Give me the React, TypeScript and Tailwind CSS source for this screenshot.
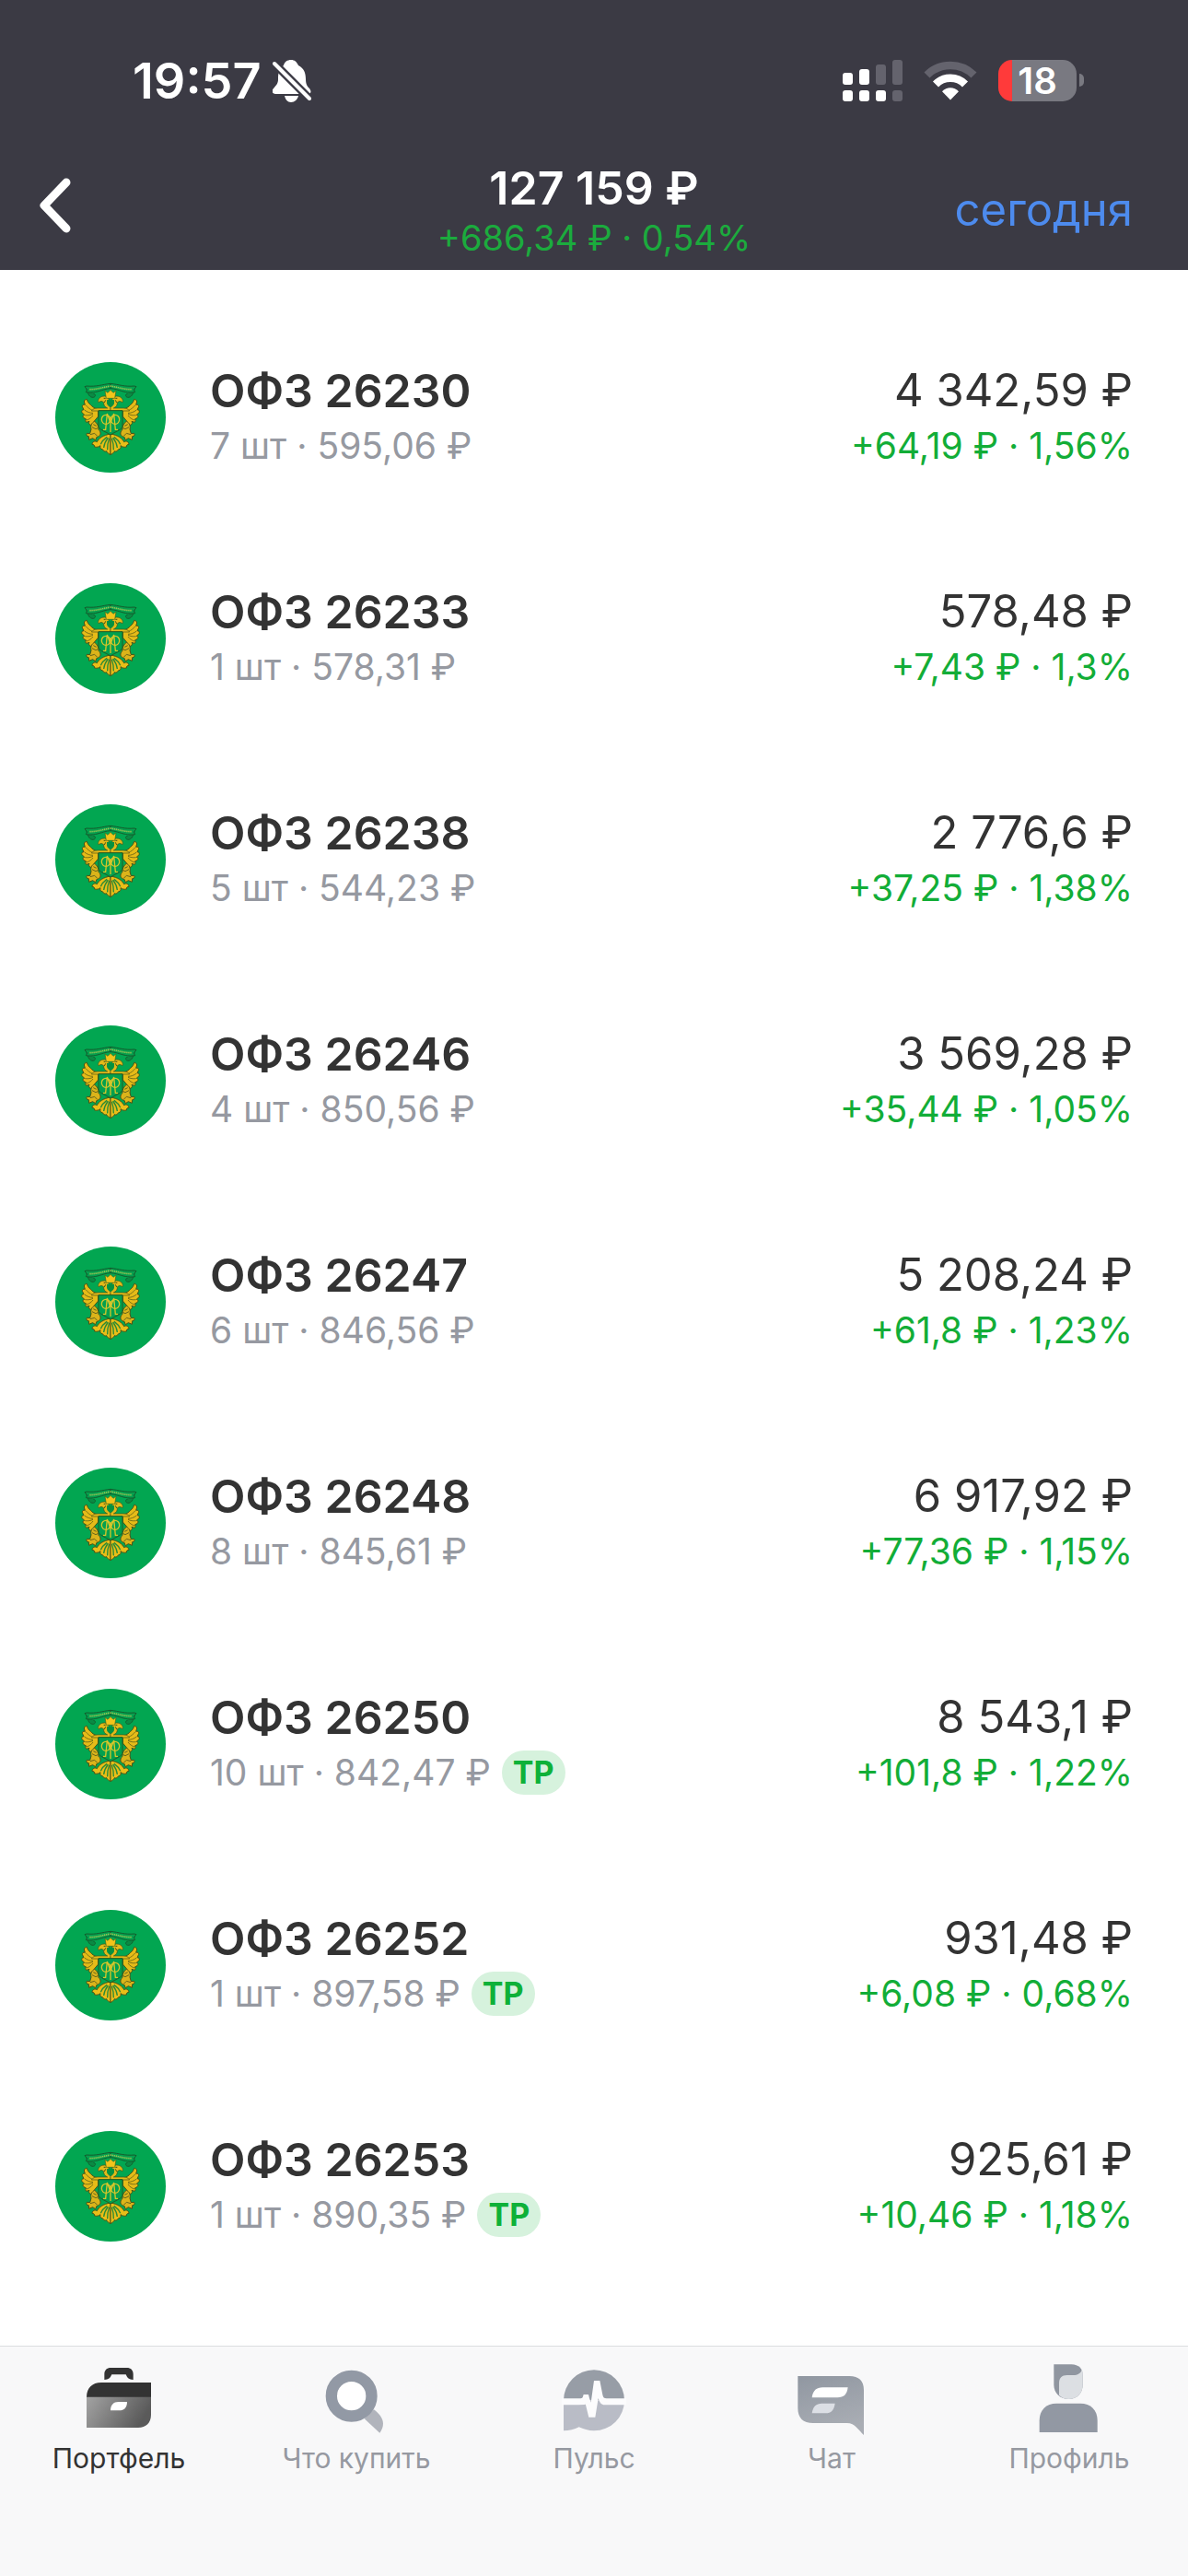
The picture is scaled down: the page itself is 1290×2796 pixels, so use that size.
import clsx from 'clsx';
import type { ReactNode } from 'react';

type Bond = {
  id: number;
  title: string;
  info: string;
  total: string;
  profit: string;
  hasBadge?: boolean;
};

const bonds: Bond[] = [
  { id: 1, title: 'ОФЗ 26230', info: '7 шт · 595,06 ₽', total: '4 342,59 ₽', profit: '+64,19 ₽ · 1,56%' },
  { id: 2, title: 'ОФЗ 26233', info: '1 шт · 578,31 ₽', total: '578,48 ₽', profit: '+7,43 ₽ · 1,3%' },
  { id: 3, title: 'ОФЗ 26238', info: '5 шт · 544,23 ₽', total: '2 776,6 ₽', profit: '+37,25 ₽ · 1,38%' },
  { id: 4, title: 'ОФЗ 26246', info: '4 шт · 850,56 ₽', total: '3 569,28 ₽', profit: '+35,44 ₽ · 1,05%' },
  { id: 5, title: 'ОФЗ 26247', info: '6 шт · 846,56 ₽', total: '5 208,24 ₽', profit: '+61,8 ₽ · 1,23%' },
  { id: 6, title: 'ОФЗ 26248', info: '8 шт · 845,61 ₽', total: '6 917,92 ₽', profit: '+77,36 ₽ · 1,15%' },
  { id: 7, title: 'ОФЗ 26250', info: '10 шт · 842,47 ₽', total: '8 543,1 ₽', profit: '+101,8 ₽ · 1,22%', hasBadge: true },
  { id: 8, title: 'ОФЗ 26252', info: '1 шт · 897,58 ₽', total: '931,48 ₽', profit: '+6,08 ₽ · 0,68%', hasBadge: true },
  { id: 9, title: 'ОФЗ 26253', info: '1 шт · 890,35 ₽', total: '925,61 ₽', profit: '+10,46 ₽ · 1,18%', hasBadge: true },
];

const BellOffIcon = () => (
  <svg className="h-[46px] w-[42px]" viewBox="0 0 42 46" aria-hidden="true">
    <path
      d="M20 0c4 0 6 2 8 6 6 3 8 8 8 15 0 6 2 8 4 10 3 4 1 6-2 6H3c-3 0-5-3-2-6 3-4 5-5 5-10 0-7 1-11 6-15 1-4 4-6 8-6Z"
      fill="#fff"
    />
    <path d="M13 39h15c-1 4-4 7-8 7s-6-3-7-7Z" fill="#fff" />
    <path d="M0 2 42 44" stroke="#3b3a44" strokeWidth="9" />
    <path d="M2 4 40 42" stroke="#fff" strokeWidth="4" strokeLinecap="round" />
  </svg>
);

const SignalIcon = () => (
  <svg className="h-[45px] w-[65px]" viewBox="0 0 65 45" aria-hidden="true">
    <g fill="#fff">
      <rect y="14" width="11" height="13" rx="3" />
      <rect x="18" y="10" width="11" height="17" rx="3" />
      <rect y="33" width="11" height="12" rx="3" />
      <rect x="18" y="33" width="11" height="12" rx="3" />
      <rect x="36" y="33" width="11" height="12" rx="3" />
    </g>
    <g fill="#64636d">
      <rect x="36" y="5" width="11" height="22" rx="3" />
      <rect x="54" y="0" width="11" height="27" rx="3" />
      <rect x="54" y="33" width="11" height="12" rx="3" />
    </g>
  </svg>
);

const WifiIcon = () => (
  <svg className="h-[43px] w-[58px]" viewBox="0 0 58 43" aria-hidden="true">
    <path d="M3.500 15.500a36 36 0 0 1 51 0" stroke="#64636d" strokeWidth="8.500" fill="none" />
    <path d="M13 25.500a22.500 22.500 0 0 1 32 0" stroke="#fff" strokeWidth="8.500" fill="none" />
    <path d="M29 42.500 20 33.200c5-5.200 13-5.200 18 0Z" fill="#fff" />
  </svg>
);

const Battery = () => (
  <div className="flex items-center gap-[3px]">
    <div className="flex h-[45px] w-[85px] items-center justify-center rounded-[15px] bg-linear-to-r from-[#ff3a3a] from-[18%] to-[#797981] to-[18%] text-[40px] leading-[45px] font-semibold">
      18
    </div>
    <div className="h-[14px] w-[5px] rounded-r-full bg-[#797981]" />
  </div>
);

const EagleHalf = () => (
  <>
    {/* ribbon */}
    <path d="M102 88c4 16 10 28 22 27 9-2 8-12 0-12" fill="#0a8a44" stroke="#14612f" strokeWidth="3" />
    <path d="M180 70c-28 3-45 11-78 8l-6 2 8 10-4 8c22 4 42-3 58-8 8-2 15-4 22-4Z" fill="#069f4e" stroke="#145c2d" strokeWidth="3" />
    <path d="M112 89c24 0 44-7 68-11" stroke="#9cc653" strokeWidth="5" strokeDasharray="4 2" fill="none" />

    {/* wing */}
    <path
      d="M140 154c-12-3-20-9-25-15-7-5-10-11-12-18-5 0-8 3-9 8l3 10c-6-2-9 1-9 6l5 10c-6 0-8 4-6 9l8 8c-6 1-6 6-2 10l8 4c-4 3-3 8 1 10l9-3c-3 5-1 10 4 12 6-1 10-6 13-14l12-14Z"
      fill="#e6bb18"
      stroke="#4a5216"
      strokeWidth="3"
    />
    <path d="M99 140c7 8 14 14 24 18M95 156c9 7 18 10 28 10M97 173c10 1 18 0 26-4M102 189c9-3 16-8 21-15" stroke="#7a7317" strokeWidth="3" fill="none" />

    {/* head */}
    <path
      d="M170 150c-8-4-13-10-12-18-4-6-10-6-17-1-4-9 5-20 19-20 11 1 17 9 13 17-3 8 0 14 7 20v11h-62c4-6 10-9 20-9Z"
      fill="#e2ba1a"
      stroke="#4a5216"
      strokeWidth="2"
    />
    <path d="M158 118h6M164 124l-4 8" stroke="#4a5216" strokeWidth="3" />

    {/* paw */}
    <path
      d="M128 193c-9 4-14 14-11 26l-4 14-10-1c-3 6 0 10 6 10l1 11 12-5 9 6 4-10c12-3 15-10 10-20l-4-4c1-12-5-22-13-27Z"
      fill="#dbb41a"
      stroke="#4a5216"
      strokeWidth="3"
    />
    <path d="m120 212 12 6 8-4M124 203l10 5M114 236l14-4 8 8" stroke="#67651a" strokeWidth="3" fill="none" />

    {/* tail */}
    <path
      d="M180 234c-24 4-38 14-44 26-8-5-15 0-16 8 6 0 8 3 8 8 8 2 14 0 19-4-2 7 1 12 7 12 3 6 8 8 13 6 2 5 7 9 13 11Z"
      fill="#e9be18"
      stroke="#4a5216"
      strokeWidth="3"
    />
    <path d="M168 244c-10 7-16 14-20 24M172 246c-9 12-13 22-14 33M176 248c-5 14-7 26-6 38" stroke="#2c8a35" strokeWidth="4" fill="none" />
  </>
);

const BondLogo = () => (
  <svg className="size-[120px] shrink-0" viewBox="0 0 360 360" aria-hidden="true">
    <circle cx="180" cy="180" r="180" fill="#02a651" />
    <EagleHalf />
    <g transform="matrix(-1 0 0 1 360 0)">
      <EagleHalf />
    </g>
    <path d="m162 93 9 7 9-9 9 9 9-7-4 25h-28Z" fill="#f2c41b" stroke="#3d6a1c" strokeWidth="2" />
    <path d="M168 123h24v10c0 7-5 10-12 13-7-3-12-6-12-13Z" fill="#06913f" />
    <path d="M141 158h78v50c0 12-19 16-39 29-20-13-39-17-39-29Z" fill="#02a04e" stroke="#245b22" strokeWidth="3" />
    <g stroke="#d6c62a" strokeWidth="4" fill="none">
      <path d="M180 178v50M156 220h8l5-52 11 30 11-30 5 52h8" />
      <ellipse cx="165" cy="187" rx="14" ry="15" />
      <ellipse cx="195" cy="187" rx="14" ry="15" />
    </g>
  </svg>
);

const BriefcaseIcon = () => (
  <svg className="size-20" viewBox="0 0 240 240" aria-hidden="true">
    <defs>
      <linearGradient id="case" x1="0" y1="0" x2="1" y2="0.300">
        <stop offset="0" stopColor="#a3a3a3" />
        <stop offset="1" stopColor="#5a5a5a" />
      </linearGradient>
    </defs>
    <path d="M73 60V42c0-13 8-21 21-21h52c13 0 21 8 21 21v18c-14 0-19-6-24-17H97c-5 11-10 17-24 17Z" fill="#333" />
    <path d="M15 117c0-30 18-48 48-48h162v48Z" fill="#333" />
    <path d="M15 116h210v58c0 26-16 42-42 42H15Z" fill="url(#case)" />
    <path d="M93 160c0-18 10-28 26-28h28c0 18-9 28-26 28Z" fill="#fff" />
  </svg>
);

const SearchIcon = () => (
  <svg className="size-20" viewBox="0 0 240 240" aria-hidden="true">
    <path d="m146 187 31-30c16 12 29 27 30 45 0 12-4 22-11 31Z" fill="#b1b4bc" />
    <circle cx="104" cy="113" r="65.500" fill="#fff" stroke="#9299a5" strokeWidth="37" />
  </svg>
);

const PulseIcon = () => (
  <svg className="size-20" viewBox="0 0 240 240" aria-hidden="true">
    <path d="M21 127a99 99 0 0 1 198 0Z" fill="#979da6" />
    <path d="M21 127h198a99 99 0 0 1-99 99c-18 0-35-5-49-12-15 8-32 12-50 12Z" fill="#b9bcc6" />
    <path
      d="M15 121h61c5 0 7-2 8-6l2-7h16l3 12 5 14 10-71h19l9 46c2 9 5 12 13 12h64v21h-70c-11 0-17-8-21-22l-10 62h-21l-10-40c-1-3-2-1-5-1l-19 1H15Z"
      fill="#fcfcfd"
    />
  </svg>
);

const ChatIcon = () => (
  <svg className="size-20" viewBox="0 0 240 240" aria-hidden="true">
    <defs>
      <linearGradient id="chat" x1="0" y1="0" x2="0.300" y2="1">
        <stop offset="0" stopColor="#9097a1" />
        <stop offset="1" stopColor="#a9adb4" />
      </linearGradient>
    </defs>
    <path d="M10 48h168c31 0 47 16 47 45v147c-17-15-28-39-55-39H60c-33 0-50-17-50-49Z" fill="url(#chat)" />
    <path d="M56 118c3-23 15-33 35-33h82c-3 23-13 33-34 33Z" fill="#fff" />
    <path d="M56 169c3-22 14-32 32-32h43c-3 22-12 32-31 32Z" fill="#dcdfe5" />
  </svg>
);

const ProfileIcon = () => (
  <svg className="size-20" viewBox="0 0 240 240" aria-hidden="true">
    <path d="M70 10h57c25 0 37 15 37 35v31c0 28-18 47-46 47S70 104 70 76Z" fill="#9096a0" />
    <path d="M87 110V72c0-18 9-27 26-27h20c15 0 24-6 29-18l2 12v37c0 28-18 47-46 47-12 0-23-5-31-13Z" fill="#dcdfe3" />
    <path d="M23 231v-38c0-35 22-56 56-56h77c34 0 56 21 56 56v38Z" fill="#9298a3" />
  </svg>
);

const tabs: { id: number; name: string; icon: ReactNode }[] = [
  { id: 1, name: 'Портфель', icon: <BriefcaseIcon /> },
  { id: 2, name: 'Что купить', icon: <SearchIcon /> },
  { id: 3, name: 'Пульс', icon: <PulseIcon /> },
  { id: 4, name: 'Чат', icon: <ChatIcon /> },
  { id: 5, name: 'Профиль', icon: <ProfileIcon /> },
];

const Header = () => (
  <header className="bg-[#3b3a44] pb-[11px] text-white">
    <div className="flex h-[174px] items-center justify-between pr-[113px] pl-36">
      <div className="flex items-center gap-3 pt-[2px]">
        <span className="text-[54px] leading-[60px] font-semibold">19:57</span>
        <BellOffIcon />
      </div>
      <div className="flex items-center gap-[23px]">
        <SignalIcon />
        <WifiIcon />
        <Battery />
      </div>
    </div>

    <div className="grid grid-cols-[1fr_auto_1fr] items-center px-[60px]">
      <button type="button" aria-label="Назад" className="-ml-5 justify-self-start pb-[10px]">
        <svg className="h-[62px] w-10" viewBox="0 0 40 62" aria-hidden="true">
          <path d="M32 6 8 31l24 25" stroke="#fff" strokeWidth="9" strokeLinecap="round" strokeLinejoin="round" fill="none" />
        </svg>
      </button>
      <div className="text-center">
        <h1 className="text-[50px] leading-[60px] font-semibold">127 159 ₽</h1>
        <p className="text-[38px] leading-[48px] text-[#1bab3d]">+686,34 ₽ · 0,54%</p>
      </div>
      <button type="button" className="justify-self-end text-[49px] leading-[60px] text-[#4d8bee]">
        сегодня
      </button>
    </div>
  </header>
);

const BondRow = ({ bond }: { bond: Bond }) => (
  <li className="flex h-60 items-center gap-12 px-[60px]">
    <BondLogo />
    <div className="flex flex-1 flex-col gap-2 pb-[2px]">
      <h2 className="text-[50px] leading-[56px] font-semibold text-[#333]">{bond.title}</h2>
      <div className="flex items-center gap-3">
        <p className="text-[39px] leading-[48px] text-[#9699a1]">{bond.info}</p>
        {bond.hasBadge && (
          <span className="rounded-full bg-[#d6f2dd] px-3 text-[34px] leading-[48px] font-bold text-[#0eb138]">TP</span>
        )}
      </div>
    </div>
    <div className="flex flex-col gap-2 pb-[2px] text-right">
      <p className="text-[49px] leading-[56px] text-[#333]">{bond.total}</p>
      <p className="text-[39px] leading-[48px] text-[#12ad37]">{bond.profit}</p>
    </div>
  </li>
);

const TabBar = () => (
  <nav className="grid h-[250px] grid-cols-5 items-start border-t border-[#dcdde0] bg-[#f8f8f9] pt-4">
    {tabs.map((tab) => (
      <a
        key={tab.id}
        href="#"
        className={clsx(
          'flex flex-col items-center gap-[5px] text-[30px] leading-[40px]',
          tab.id === 1 ? 'text-[#333]' : 'text-[#9699a1]',
        )}>
        {tab.icon}
        {tab.name}
      </a>
    ))}
  </nav>
);

export default function App() {
  return (
    <div className="flex min-h-screen flex-col bg-white font-['Inter','Liberation_Sans',sans-serif]">
      <Header />
      <main className="flex-1 pt-10">
        <ul>
          {bonds.map((bond) => (
            <BondRow key={bond.id} bond={bond} />
          ))}
        </ul>
      </main>
      <TabBar />
    </div>
  );
}
